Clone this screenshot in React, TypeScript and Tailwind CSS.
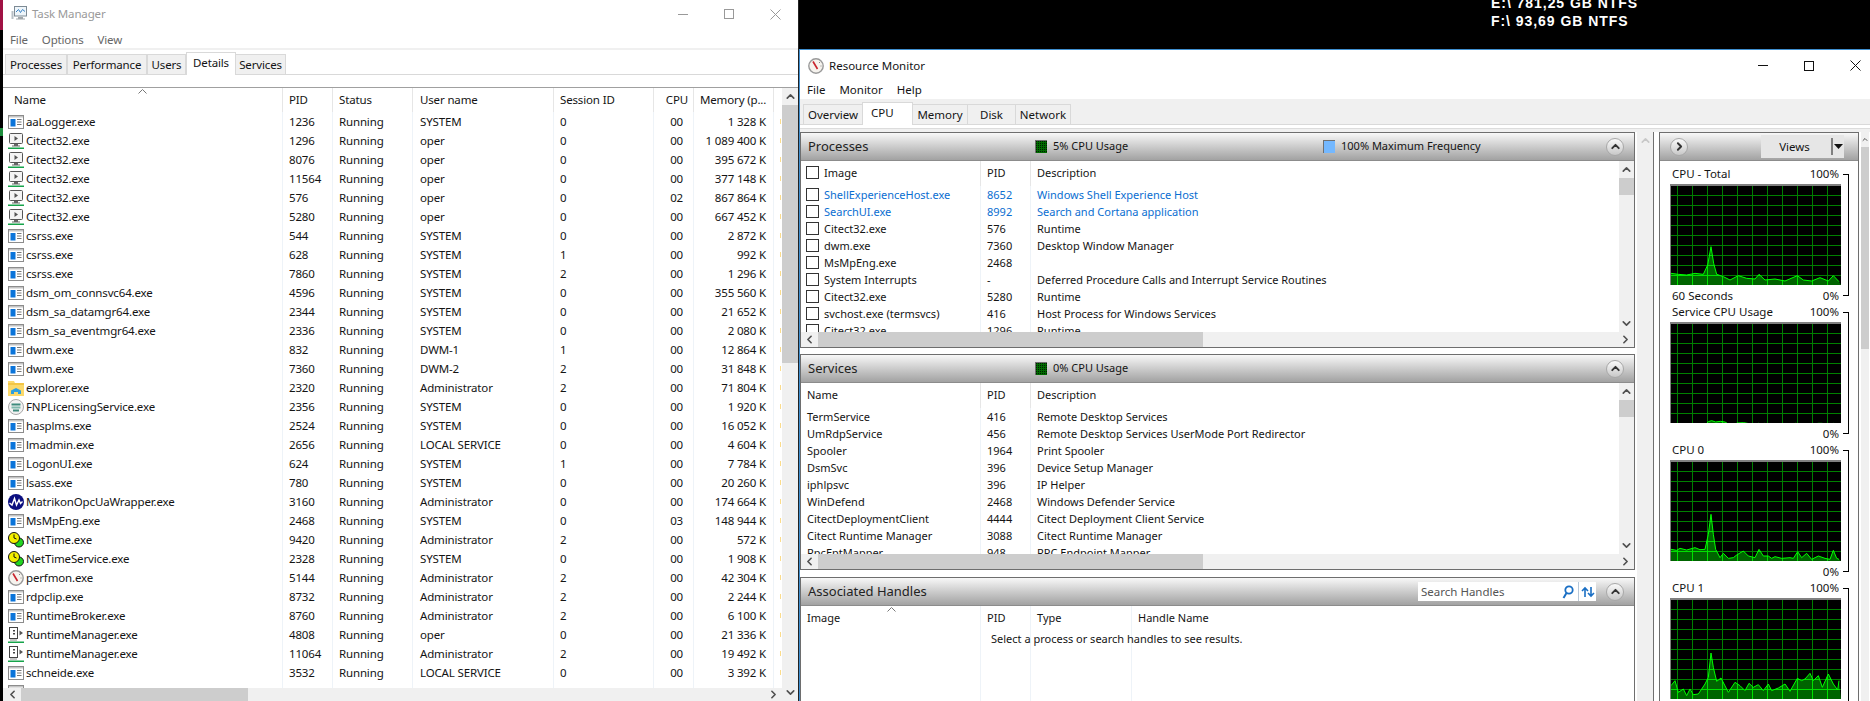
import { ChevronUp, ChevronDown, ChevronLeft, ChevronRight } from 'lucide-react'

// ============================================
// Task Manager + Resource Monitor side by side
// ============================================

type Proc = { name: string; pid: string; user: string; sid: string; cpu: string; mem: string; icon?: string }

const PROCS: Proc[] = [
  { name: 'aaLogger.exe', pid: '1236', user: 'SYSTEM', sid: '0', cpu: '00', mem: '1 328 K' },
  { name: 'Citect32.exe', pid: '1296', user: 'oper', sid: '0', cpu: '00', mem: '1 089 400 K', icon: 'monitor' },
  { name: 'Citect32.exe', pid: '8076', user: 'oper', sid: '0', cpu: '00', mem: '395 672 K', icon: 'monitor' },
  { name: 'Citect32.exe', pid: '11564', user: 'oper', sid: '0', cpu: '00', mem: '377 148 K', icon: 'monitor' },
  { name: 'Citect32.exe', pid: '576', user: 'oper', sid: '0', cpu: '02', mem: '867 864 K', icon: 'monitor' },
  { name: 'Citect32.exe', pid: '5280', user: 'oper', sid: '0', cpu: '00', mem: '667 452 K', icon: 'monitor' },
  { name: 'csrss.exe', pid: '544', user: 'SYSTEM', sid: '0', cpu: '00', mem: '2 872 K' },
  { name: 'csrss.exe', pid: '628', user: 'SYSTEM', sid: '1', cpu: '00', mem: '992 K' },
  { name: 'csrss.exe', pid: '7860', user: 'SYSTEM', sid: '2', cpu: '00', mem: '1 296 K' },
  { name: 'dsm_om_connsvc64.exe', pid: '4596', user: 'SYSTEM', sid: '0', cpu: '00', mem: '355 560 K' },
  { name: 'dsm_sa_datamgr64.exe', pid: '2344', user: 'SYSTEM', sid: '0', cpu: '00', mem: '21 652 K' },
  { name: 'dsm_sa_eventmgr64.exe', pid: '2336', user: 'SYSTEM', sid: '0', cpu: '00', mem: '2 080 K' },
  { name: 'dwm.exe', pid: '832', user: 'DWM-1', sid: '1', cpu: '00', mem: '12 864 K' },
  { name: 'dwm.exe', pid: '7360', user: 'DWM-2', sid: '2', cpu: '00', mem: '31 848 K' },
  { name: 'explorer.exe', pid: '2320', user: 'Administrator', sid: '2', cpu: '00', mem: '71 804 K', icon: 'folder' },
  { name: 'FNPLicensingService.exe', pid: '2356', user: 'SYSTEM', sid: '0', cpu: '00', mem: '1 920 K', icon: 'fnp' },
  { name: 'hasplms.exe', pid: '2524', user: 'SYSTEM', sid: '0', cpu: '00', mem: '16 052 K' },
  { name: 'lmadmin.exe', pid: '2656', user: 'LOCAL SERVICE', sid: '0', cpu: '00', mem: '4 604 K' },
  { name: 'LogonUI.exe', pid: '624', user: 'SYSTEM', sid: '1', cpu: '00', mem: '7 784 K' },
  { name: 'lsass.exe', pid: '780', user: 'SYSTEM', sid: '0', cpu: '00', mem: '20 260 K' },
  { name: 'MatrikonOpcUaWrapper.exe', pid: '3160', user: 'Administrator', sid: '0', cpu: '00', mem: '174 664 K', icon: 'matrikon' },
  { name: 'MsMpEng.exe', pid: '2468', user: 'SYSTEM', sid: '0', cpu: '03', mem: '148 944 K' },
  { name: 'NetTime.exe', pid: '9420', user: 'Administrator', sid: '2', cpu: '00', mem: '572 K', icon: 'nettime' },
  { name: 'NetTimeService.exe', pid: '2328', user: 'SYSTEM', sid: '0', cpu: '00', mem: '1 908 K', icon: 'nettime' },
  { name: 'perfmon.exe', pid: '5144', user: 'Administrator', sid: '2', cpu: '00', mem: '42 304 K', icon: 'perfmon' },
  { name: 'rdpclip.exe', pid: '8732', user: 'Administrator', sid: '2', cpu: '00', mem: '2 244 K' },
  { name: 'RuntimeBroker.exe', pid: '8760', user: 'Administrator', sid: '2', cpu: '00', mem: '6 100 K' },
  { name: 'RuntimeManager.exe', pid: '4808', user: 'oper', sid: '0', cpu: '00', mem: '21 336 K', icon: 'runtime' },
  { name: 'RuntimeManager.exe', pid: '11064', user: 'Administrator', sid: '2', cpu: '00', mem: '19 492 K', icon: 'runtime' },
  { name: 'schneide.exe', pid: '3532', user: 'LOCAL SERVICE', sid: '0', cpu: '00', mem: '3 392 K' },
]

const RM_PROCS = [
  ['ShellExperienceHost.exe', '8652', 'Windows Shell Experience Host', 'blue'],
  ['SearchUI.exe', '8992', 'Search and Cortana application', 'blue'],
  ['Citect32.exe', '576', 'Runtime'],
  ['dwm.exe', '7360', 'Desktop Window Manager'],
  ['MsMpEng.exe', '2468', ''],
  ['System Interrupts', '-', 'Deferred Procedure Calls and Interrupt Service Routines'],
  ['Citect32.exe', '5280', 'Runtime'],
  ['svchost.exe (termsvcs)', '416', 'Host Process for Windows Services'],
  ['Citect32.exe', '1296', 'Runtime'],
]

const RM_SERVICES = [
  ['TermService', '416', 'Remote Desktop Services'],
  ['UmRdpService', '456', 'Remote Desktop Services UserMode Port Redirector'],
  ['Spooler', '1964', 'Print Spooler'],
  ['DsmSvc', '396', 'Device Setup Manager'],
  ['iphlpsvc', '396', 'IP Helper'],
  ['WinDefend', '2468', 'Windows Defender Service'],
  ['CitectDeploymentClient', '4444', 'Citect Deployment Client Service'],
  ['Citect Runtime Manager', '3088', 'Citect Runtime Manager'],
  ['RpcEptMapper', '948', 'RPC Endpoint Mapper'],
]

// graph points, read off the picture at 3x: [x, y]
const CPU_TOTAL: [number, number][] = [[218, 745], [240, 748], [265, 750], [290, 745], [315, 748], [328, 720], [338, 665], [346, 715], [355, 748], [375, 755], [395, 765], [420, 752], [445, 760], [470, 762], [482, 748], [500, 765], [530, 762], [560, 768], [597, 752], [615, 765], [640, 768], [665, 758], [690, 768], [705, 752], [722, 770]]
const CPU_SERVICE: [number, number][] = [[218, 786], [278, 786], [282, 782], [288, 786], [320, 786], [330, 776], [340, 773], [352, 777], [366, 775], [380, 777], [390, 783], [408, 786], [416, 780], [436, 779], [452, 782], [458, 786], [474, 786], [480, 781], [490, 783], [500, 781], [506, 786], [585, 786], [590, 781], [600, 782], [606, 786], [622, 786], [626, 782], [632, 786], [655, 786], [658, 781], [672, 781], [678, 786], [700, 786], [706, 781], [714, 783], [722, 786]]
const CPU_0: [number, number][] = [[218, 745], [235, 748], [245, 742], [265, 747], [290, 740], [305, 746], [320, 745], [330, 700], [338, 640], [345, 700], [352, 745], [365, 770], [375, 757], [390, 772], [405, 770], [415, 762], [435, 750], [450, 765], [470, 770], [482, 745], [495, 765], [510, 765], [520, 772], [530, 767], [550, 772], [575, 770], [585, 772], [598, 752], [610, 770], [625, 757], [640, 775], [660, 765], [680, 772], [695, 775], [705, 748], [715, 772], [722, 775]]
const CPU_1: [number, number][] = [[218, 740], [230, 725], [240, 760], [255, 750], [265, 770], [275, 750], [285, 767], [300, 765], [320, 735], [330, 715], [338, 642], [345, 685], [355, 727], [368, 717], [390, 760], [410, 730], [425, 740], [440, 755], [452, 733], [465, 745], [480, 737], [495, 755], [510, 735], [520, 755], [540, 747], [560, 735], [575, 757], [597, 718], [610, 725], [620, 720], [635, 703], [645, 725], [660, 710], [672, 745], [690, 705], [705, 735], [718, 753], [722, 725]]

function toGraph(pts: [number, number][]) {
  return pts.map(([x, y]) => [(x - 218) / 3, (y - 483) / 3] as [number, number])
}

function Graph({ id, pts }: { id: string; pts: [number, number][] }) {
  const line = toGraph(pts).map(([x, y]) => `${x},${y}`).join(' ')
  const area = `0,99 ${line} 170,99`
  const grid = (
    <>
      {Array.from({ length: 11 }, (_, i) => (
        <line key={`v${i}`} x1={6.5 + i * 15} x2={6.5 + i * 15} y1={0} y2={99} />
      ))}
      {Array.from({ length: 9 }, (_, i) => (
        <line key={`h${i}`} x1={0} x2={170} y1={9.5 + i * 10} y2={9.5 + i * 10} />
      ))}
    </>
  )
  return (
    <div className="h-[101px] w-[171px] border-t-2 border-l border-[#808080]">
      <svg width={170} height={99} viewBox="0 0 170 99" className="block">
        <rect width={170} height={99} fill="#000" />
        <g stroke="#008000" strokeWidth={1}>{grid}</g>
        <clipPath id={id}><polygon points={area} /></clipPath>
        <polygon points={area} fill="#006400" />
        <g stroke="#00e000" strokeWidth={1} clipPath={`url(#${id})`}>{grid}</g>
        <polyline points={line} fill="none" stroke="#00ff00" strokeWidth={1} />
      </svg>
    </div>
  )
}

function GraphBlock({ id, title, foot, pts }: { id: string; title: string; foot?: string; pts: [number, number][] }) {
  return (
    <div className="flex h-[138px] shrink-0 text-[11.5px]">
      <div className="w-[171px]">
        <div className="flex h-[16px] items-center justify-between pl-[2px] pr-[2px] leading-none">
          <span>{title}</span>
          <span>100%</span>
        </div>
        <div className="mt-[2px]"><Graph id={id} pts={pts} /></div>
        <div className="mt-[2px] flex h-[17px] items-center justify-between pl-[2px] pr-[2px] leading-none">
          <span>{foot}</span>
          <span>0%</span>
        </div>
      </div>
      <div className="ml-[2px] mt-[8px] h-[122px] w-[6px] border-y border-r border-black" />
    </div>
  )
}

// ---------- icons ----------

function AppIcon({ type }: { type?: string }) {
  if (type === 'monitor') {
    return (
      <svg width={16} height={16} viewBox="0 0 16 16" className="shrink-0">
        <rect x={1.5} y={0.5} width={13} height={10} rx={1} fill="#f4f4f4" stroke="#555" />
        <path d="M6.5 3 L10 5.5 L6.5 8Z" fill="#555" />
        <path d="M6 11h4v1.5h2V13.5H4V12.5h2Z" fill="#666" />
        <rect x={0} y={14.5} width={16} height={1.5} fill="#16a34a" />
      </svg>
    )
  }
  if (type === 'runtime') {
    return (
      <svg width={16} height={16} viewBox="0 0 16 16" className="shrink-0">
        <rect x={1.5} y={0.5} width={8} height={11} fill="#fff" stroke="#444" />
        <path d="M5 3h2v1.5H5Zm0 3h2v1.5H5Z" fill="#444" />
        <path d="M11.5 3.5 L15 6 L11.5 8.5Z" fill="#555" />
        <path d="M2 12.5h7v1H2Z" fill="#888" />
        <rect x={0} y={14.5} width={16} height={1.5} fill="#16a34a" />
      </svg>
    )
  }
  if (type === 'folder') {
    return (
      <svg width={16} height={16} viewBox="0 0 16 16" className="shrink-0">
        <path d="M0 1h6l1 2h9v13H0Z" fill="#fbd96b" />
        <path d="M0 3h16v2H0Z" fill="#f3c544" />
        <path d="M3 14V10.5L8 8l5 2.5V14h-3v-2H6v2Z" fill="#2f9fe0" />
      </svg>
    )
  }
  if (type === 'fnp') {
    return (
      <svg width={16} height={16} viewBox="0 0 16 16" className="shrink-0">
        <circle cx={8} cy={8} r={7.5} fill="#f2f2f2" stroke="#a8a8a8" />
        <path d="M3.5 4.5h9v2h-9Z" fill="#3d8a7c" />
        <path d="M3.5 7.5h9v2h-9Z" fill="#7db8ac" />
        <path d="M5 10.5h6v2H5Z" fill="#3d8a7c" />
      </svg>
    )
  }
  if (type === 'matrikon') {
    return (
      <svg width={16} height={16} viewBox="0 0 16 16" className="shrink-0">
        <circle cx={8} cy={8} r={8} fill="#0b0f80" />
        <path d="M1.5 9 L4 11 L6.5 4.5 L8.5 11 L11 6 L12.5 9.5 L14.5 7.5" fill="none" stroke="#fff" strokeWidth={1.4} />
      </svg>
    )
  }
  if (type === 'nettime') {
    return (
      <svg width={16} height={16} viewBox="0 0 16 16" className="shrink-0">
        <circle cx={11} cy={10.5} r={4.5} fill="#22d422" stroke="#111" />
        <circle cx={6} cy={6} r={5.5} fill="#f5f000" stroke="#111" />
        <path d="M6 2.5V6L8.5 7" fill="none" stroke="#111" />
      </svg>
    )
  }
  if (type === 'perfmon') return <GaugeIcon />
  return (
    <svg width={16} height={14} viewBox="0 0 16 14" className="shrink-0">
      <rect x={0.5} y={0.5} width={15} height={13} fill="#fff" stroke="#8c8c8c" />
      <rect x={1} y={1} width={14} height={1.5} fill="#c4c4c4" />
      <rect x={2.5} y={4} width={5} height={7.5} fill="#0a74da" />
      <path d="M9 4.5h4.5M9 7h4.5M9 9.5h4.5" stroke="#777" />
    </svg>
  )
}

function GaugeIcon() {
  return (
    <svg width={16} height={16} viewBox="0 0 16 16" className="shrink-0">
      <circle cx={8} cy={8} r={7.2} fill="#f6f3ee" stroke="#9a9a9a" strokeWidth={1.4} />
      <path d="M5 3.5 L9.5 11" stroke="#c8232c" strokeWidth={1.6} />
      <path d="M11 4l1 1M12.5 8h1" stroke="#888" />
    </svg>
  )
}

function TaskIcon() {
  return (
    <svg width={16} height={16} viewBox="0 0 16 16" className="shrink-0">
      <rect x={3.5} y={0.5} width={12} height={9.5} fill="#eef5fa" stroke="#7d8a94" />
      <path d="M5 6 L7.5 3.5 L9.5 6.5 L11.5 3.5 L14 5.5" fill="none" stroke="#3a83c4" />
      <path d="M7 11h5v1.5h2v1H5v-1h2Z" fill="#a0a6aa" />
      <rect x={0.5} y={5} width={2} height={8} fill="#b8c0c6" />
    </svg>
  )
}

function WinControls({ color }: { color: string }) {
  return (
    <div className="flex h-full" style={{ color }}>
      <div className="flex w-[46px] items-center justify-center">
        <div className="h-px w-[10px] bg-current" />
      </div>
      <div className="flex w-[46px] items-center justify-center">
        <div className="h-[10px] w-[10px] border border-current" />
      </div>
      <div className="flex w-[46px] items-center justify-center">
        <svg width={11} height={11} viewBox="0 0 11 11"><path d="M0.5 0.5 L10.5 10.5 M10.5 0.5 L0.5 10.5" stroke="currentColor" /></svg>
      </div>
    </div>
  )
}

function SortCaret() {
  return (
    <svg width={9} height={5} viewBox="0 0 9 5" className="block">
      <path d="M0.5 4.5 L4.5 0.5 L8.5 4.5" fill="none" stroke="#777" />
    </svg>
  )
}

// ---------- scrollbars ----------

function VScroll({ className, thumbTop, thumbH }: { className: string; thumbTop: string; thumbH: string }) {
  return (
    <div className={`flex shrink-0 flex-col items-center bg-[#f0f0f0] text-[#505050] ${className}`}>
      <div className={`flex w-full items-center justify-center ${thumbTop}`}><ChevronUp size={13} strokeWidth={3} /></div>
      <div className={`w-full bg-[#cdcdcd] ${thumbH}`} />
      <div className="flex-1" />
      <div className="flex h-[17px] w-full items-center justify-center"><ChevronDown size={13} strokeWidth={3} /></div>
    </div>
  )
}

function HScroll({ className, lead, thumb }: { className: string; lead: string; thumb: string }) {
  return (
    <div className={`flex shrink-0 items-stretch bg-[#f0f0f0] text-[#505050] ${className}`}>
      <div className={`flex items-center justify-center ${lead}`}><ChevronLeft size={13} strokeWidth={3} /></div>
      <div className={`bg-[#cdcdcd] ${thumb}`} />
      <div className="flex-1" />
      <div className="flex w-[18px] items-center justify-center"><ChevronRight size={13} strokeWidth={3} /></div>
    </div>
  )
}

function RoundButton({ right }: { right?: boolean }) {
  return (
    <div className="flex h-[18px] w-[18px] items-center justify-center rounded-full border border-[#a8a8a8] bg-linear-to-b from-[#fafafa] to-[#c8c8c8] text-[#333]">
      {right ? <ChevronRight size={13} strokeWidth={3.5} /> : <ChevronUp size={13} strokeWidth={3.5} />}
    </div>
  )
}

function Swatch({ blue }: { blue?: boolean }) {
  return (
    <div className={`h-[13px] w-[12px] border-t border-l border-[#707070] ${blue ? 'bg-[#74b8ff]' : 'bg-[#006a00]'}`}>
      {!blue && (
        <svg width={11} height={12} className="block">
          <defs>
            <pattern id="dots" width={2} height={2} patternUnits="userSpaceOnUse"><rect width={1} height={1} fill="#001c00" /></pattern>
          </defs>
          <rect width={11} height={12} fill="url(#dots)" />
        </svg>
      )}
    </div>
  )
}

// ---------- panels ----------

function PanelHeader({ title, swatches, search }: { title: string; swatches?: [string, number, boolean?][]; search?: boolean }) {
  return (
    <div className="flex h-[28px] shrink-0 items-center border-b border-[#8c8c8c] bg-linear-to-b from-[#f8f8f8] to-[#a2a2a2]">
      <span className="w-[234px] pl-[7px] text-[13px] text-[#222]">{title}</span>
      {swatches?.map(([label, w, blue]) => (
        <div key={label} className="flex items-center gap-[6px]" style={{ width: w }}>
          <Swatch blue={blue} />
          <span>{label}</span>
        </div>
      ))}
      <div className="flex-1" />
      {search && (
        <div className="mr-[10px] flex h-[19px] w-[178px] items-center bg-white pl-[3px] text-[#555]">
          <span className="flex-1 text-[11.5px]">Search Handles</span>
          <svg width={12} height={14} viewBox="0 0 12 14" className="mr-[4px]">
            <circle cx={7} cy={5} r={3.7} fill="none" stroke="#1a6fc4" strokeWidth={1.8} />
            <path d="M4.5 8 L1.5 13" stroke="#1a6fc4" strokeWidth={2} />
          </svg>
          <div className="flex h-full w-[18px] items-center justify-center border-l border-[#b8c8d8]">
            <svg width={14} height={14} viewBox="0 0 14 14">
              <path d="M4 12V3M1 6l3-3 3 3" fill="none" stroke="#1a6fc4" strokeWidth={1.6} />
              <path d="M10 2v9M7 8l3 3 3-3" fill="none" stroke="#1a6fc4" strokeWidth={1.6} />
            </svg>
          </div>
        </div>
      )}
      <div className="mr-[10px]"><RoundButton /></div>
    </div>
  )
}

function RmTable({ head, rows, check }: { head: string; rows: string[][]; check?: boolean }) {
  const pad = check ? 'pl-[23px]' : 'pl-[6px]'
  return (
    <div className="min-w-0 flex-1 overflow-hidden">
      <div className="flex h-[25px] items-center">
        <div className={`relative flex h-full w-[180px] items-center border-r border-[#e6e6e6] ${pad}`}>
          {check && <div className="absolute top-[5px] left-[5px] h-[13px] w-[13px] border border-[#333] bg-white" />}
          {head}
        </div>
        <div className="flex h-full w-[50px] items-center border-r border-[#e6e6e6] pl-[6px]">PID</div>
        <div className="pl-[6px]">Description</div>
      </div>
      {rows.map((r, i) => (
        <div key={i} className={`flex h-[17px] items-center leading-none ${r[3] ? 'text-[#0a6ed1]' : ''}`}>
          <div className={`relative flex h-full w-[180px] items-center border-r border-[#eef3f8] ${pad}`}>
            {check && <div className="absolute top-[2px] left-[5px] h-[13px] w-[13px] border border-[#333] bg-white" />}
            {r[0]}
          </div>
          <div className="flex h-full w-[50px] items-center border-r border-[#eef3f8] pl-[6px]">{r[1]}</div>
          <div className="pl-[6px]">{r[2]}</div>
        </div>
      ))}
    </div>
  )
}

function RmPanel({ title, swatches, head, rows, check }: { title: string; swatches: [string, number, boolean?][]; head: string; rows: string[][]; check?: boolean }) {
  return (
    <div className="flex h-[216px] shrink-0 flex-col border border-[#6e6e6e] bg-white">
      <PanelHeader title={title} swatches={swatches} />
      <div className="flex min-h-0 flex-1">
        <RmTable head={head} rows={rows} check={check} />
        <VScroll className="w-[15px]" thumbTop="h-[17px]" thumbH="h-[17px]" />
      </div>
      <HScroll className="h-[15px]" lead="w-[17px]" thumb="w-[385px]" />
    </div>
  )
}

export default function App() {
  return (
    <div className="flex h-[701px] w-[1870px] overflow-hidden bg-black font-['Noto_Sans',sans-serif] text-[11px] text-[#141414]">
      {/* desktop sliver behind the windows */}
      <div className="flex w-[3px] shrink-0 flex-col">
        <div className="h-[30px] bg-[#a01244]" />
        <div className="h-[98px] bg-black" />
        <div className="h-[8px] bg-[#1c8c3c]" />
        <div className="flex-1 bg-black" />
      </div>

      {/* Task Manager */}
      <div className="flex w-[795px] shrink-0 flex-col bg-white text-[11.5px] tracking-[-0.15px]">
        <div className="flex h-[31px] shrink-0 items-center pb-[3px] pl-[8px] text-[#9a9a9a]">
          <TaskIcon />
          <span className="ml-[5px] flex-1">Task Manager</span>
          <WinControls color="#999999" />
        </div>
        <div className="flex h-[17px] shrink-0 items-center gap-[14px] pl-[7px] text-[#666]">
          <span>File</span><span>Options</span><span>View</span>
        </div>
        <div className="h-[2px] shrink-0 bg-[#f0f0f0]" />
        <div className="flex h-[25px] shrink-0 items-end border-b border-[#d9d9d9] pl-[2px]">
          {[['Processes', 'w-[62px]'], ['Performance', 'w-[80px]'], ['Users', 'w-[39px]']].map(([t, w]) => (
            <div key={t} className={`flex h-[20px] items-center justify-center border-t border-r border-l border-[#d9d9d9] bg-[#f0f0f0] ${w}`}>{t}</div>
          ))}
          <div className="-mb-px flex h-[23px] w-[50px] items-center justify-center border-t border-r border-l border-[#d9d9d9] bg-white pb-[2px]">Details</div>
          <div className="flex h-[20px] w-[50px] items-center justify-center border-t border-r border-[#d9d9d9] bg-[#f0f0f0]">Services</div>
        </div>
        <div className="h-[12px] shrink-0" />
        <div className="flex min-h-0 flex-1 border-t border-[#a0a0a0]">
          <div className="flex min-w-0 flex-1 flex-col">
            <div className="min-h-0 flex-1 overflow-hidden">
              <div className="relative flex h-[24px] items-center">
                <div className="absolute top-[1px] left-[135px]"><SortCaret /></div>
                <div className="flex h-full w-[280px] items-center border-r border-[#e6e6e6] pl-[11px]">Name</div>
                <div className="flex h-full w-[50px] items-center border-r border-[#e6e6e6] pl-[6px]">PID</div>
                <div className="flex h-full w-[80px] items-center border-r border-[#e6e6e6] pl-[6px]">Status</div>
                <div className="flex h-full w-[141px] items-center border-r border-[#e6e6e6] pl-[7px]">User name</div>
                <div className="flex h-full w-[100px] items-center border-r border-[#e6e6e6] pl-[6px]">Session ID</div>
                <div className="flex h-full w-[40px] items-center justify-end border-r border-[#e6e6e6] pr-[5px]">CPU</div>
                <div className="flex h-full w-[80px] items-center border-r border-[#e6e6e6] pl-[6px]">Memory (p...</div>
              </div>
              {PROCS.map((p, i) => (
                <div key={i} className="flex h-[19px] items-center leading-none">
                  <div className="flex h-full w-[280px] items-center gap-[2px] border-r border-[#eef3f8] pl-[5px]">
                    <AppIcon type={p.icon} />
                    <span>{p.name}</span>
                  </div>
                  <div className="flex h-full w-[50px] items-center border-r border-[#eef3f8] pl-[6px]">{p.pid}</div>
                  <div className="flex h-full w-[80px] items-center border-r border-[#eef3f8] pl-[6px]">Running</div>
                  <div className="flex h-full w-[141px] items-center border-r border-[#eef3f8] pl-[7px]">{p.user}</div>
                  <div className="flex h-full w-[100px] items-center border-r border-[#eef3f8] pl-[6px]">{p.sid}</div>
                  <div className="flex h-full w-[40px] items-center justify-end border-r border-[#eef3f8] pr-[10px]">{p.cpu}</div>
                  <div className="flex h-full w-[80px] items-center justify-end border-r border-[#eef3f8] pr-[7px] whitespace-nowrap">{p.mem}</div>
                  <div className="ml-[6px] h-[5px] w-px bg-[#fbdc8c]" />
                </div>
              ))}
              {/* next row, only the top of its icon shows */}
              <div className="flex h-[19px] items-start">
                <div className="flex h-full w-[280px] items-center border-r border-[#eef3f8] pl-[5px]"><AppIcon /></div>
                <div className="h-full w-[50px] border-r border-[#eef3f8]" />
                <div className="h-full w-[80px] border-r border-[#eef3f8]" />
                <div className="h-full w-[141px] border-r border-[#eef3f8]" />
                <div className="h-full w-[100px] border-r border-[#eef3f8]" />
                <div className="h-full w-[40px] border-r border-[#eef3f8]" />
                <div className="h-full w-[80px] border-r border-[#eef3f8]" />
              </div>
            </div>
            <HScroll className="h-[13px]" lead="w-[18px]" thumb="w-[227px]" />
          </div>
          <VScroll className="w-[16px]" thumbTop="h-[17px]" thumbH="h-[258px]" />
        </div>
      </div>

      <div className="w-px shrink-0 bg-[#222]" />

      {/* Resource Monitor */}
      <div className="flex min-w-0 flex-1 flex-col">
        <div className="flex h-[49px] shrink-0 flex-col justify-end overflow-hidden bg-black pb-[19px] pl-[692px] font-['Liberation_Sans',sans-serif] text-[14px] leading-[18px] font-bold tracking-[0.95px] text-white">
          <div>E:\ 781,25 GB NTFS</div>
          <div>F:\ 93,69 GB NTFS</div>
        </div>
        <div className="flex min-h-0 flex-1 flex-col border-t border-l border-[#3f8fd0] bg-white">
          <div className="flex h-[31px] shrink-0 items-center pl-[8px] text-[11.5px]">
            <GaugeIcon />
            <span className="ml-[5px] flex-1">Resource Monitor</span>
            <div className="-mr-[8px] h-full"><WinControls color="#111111" /></div>
          </div>
          <div className="flex h-[18px] shrink-0 items-center gap-[14px] pl-[7px] text-[11.5px]">
            <span>File</span><span>Monitor</span><span>Help</span>
          </div>
          <div className="flex h-[26px] shrink-0 items-end border-b border-[#d9d9d9] bg-[#f0f0f0] pl-[3px] text-[11.5px]">
            <div className="flex h-[20px] w-[59px] items-center justify-center border-t border-l border-[#d9d9d9]">Overview</div>
            <div className="-mb-px flex h-[23px] w-[51px] items-start border-x border-t border-[#d9d9d9] bg-white pt-[1px] pl-[8px]">CPU</div>
            <div className="flex h-[20px] w-[55px] items-center justify-center border-t border-r border-[#d9d9d9]">Memory</div>
            <div className="flex h-[20px] w-[48px] items-center justify-center border-t border-r border-[#d9d9d9]">Disk</div>
            <div className="flex h-[20px] w-[55px] items-center justify-center border-t border-r border-[#d9d9d9]">Network</div>
          </div>
          <div className="h-[3px] shrink-0 bg-white" />
          <div className="h-[4px] shrink-0 border-t border-[#dcdcdc] bg-[#f0f0f0]" />

          <div className="flex min-h-0 flex-1">
            {/* left column */}
            <div className="flex w-[835px] shrink-0 flex-col">
              <RmPanel
                title="Processes"
                swatches={[['5% CPU Usage', 288], ['100% Maximum Frequency', 270, true]]}
                head="Image"
                rows={RM_PROCS}
                check
              />
              <div className="h-[6px] shrink-0" />
              <RmPanel
                title="Services"
                swatches={[['0% CPU Usage', 288]]}
                head="Name"
                rows={RM_SERVICES}
              />
              <div className="h-[7px] shrink-0" />
              <div className="flex min-h-0 flex-1 flex-col border border-[#6e6e6e] border-b-0 bg-white">
                <PanelHeader title="Associated Handles" search />
                <div className="relative min-h-0 flex-1">
                  <div className="absolute top-[1px] left-[86px]"><SortCaret /></div>
                  <div className="absolute top-[27px] left-[190px] leading-none">Select a process or search handles to see results.</div>
                  <div className="flex h-full">
                    <div className="h-full w-[180px] border-r border-[#eef3f8] pl-[6px] pt-[4px]">Image</div>
                    <div className="h-full w-[50px] border-r border-[#eef3f8] pl-[6px] pt-[4px]">PID</div>
                    <div className="h-full w-[101px] border-r border-[#eef3f8] pl-[6px] pt-[4px]">Type</div>
                    <div className="pl-[6px] pt-[4px]">Handle Name</div>
                  </div>
                </div>
              </div>
            </div>

            {/* strip between the columns */}
            <div className="ml-[2px] flex w-[16px] shrink-0 justify-center bg-[#f0f0f0] pt-[1px] text-[#c8c8c8]">
              <ChevronUp size={13} strokeWidth={3} className="mt-[1px]" />
            </div>
            <div className="w-px shrink-0 bg-[#707070]" />
            <div className="w-[5px] shrink-0" />

            {/* graphs */}
            <div className="flex w-[200px] shrink-0 flex-col border-x border-t border-[#6e6e6e]">
              <div className="flex h-[28px] shrink-0 items-center border-b border-[#8c8c8c] bg-linear-to-b from-[#f8f8f8] to-[#a2a2a2] pl-[10px]">
                <RoundButton right />
                <div className="ml-[73px] flex h-[23px] w-[83px] items-center bg-[#e6e6e6]">
                  <span className="flex-1 pr-[3px] text-center text-[11.5px]">Views</span>
                  <div className="flex h-[17px] w-[13px] items-center justify-center border-l-2 border-[#808080]">
                    <svg width={9} height={5} viewBox="0 0 9 5"><path d="M0 0h9L4.5 5Z" fill="#111" /></svg>
                  </div>
                </div>
              </div>
              <div className="min-h-0 flex-1 overflow-hidden pl-[10px] pt-[5px]">
                <GraphBlock id="g-total" title="CPU - Total" foot="60 Seconds" pts={CPU_TOTAL} />
                <GraphBlock id="g-svc" title="Service CPU Usage" pts={CPU_SERVICE} />
                <GraphBlock id="g-0" title="CPU 0" pts={CPU_0} />
                <GraphBlock id="g-1" title="CPU 1" pts={CPU_1} />
              </div>
            </div>
            <div className="w-[2px] shrink-0" />
            <div className="flex w-[8px] shrink-0 flex-col bg-[#f0f0f0]">
              <div className="flex h-[15px] justify-start text-[#555]"><ChevronUp size={13} strokeWidth={3} className="mt-[1px]" /></div>
              <div className="h-[202px] bg-[#cdcdcd]" />
            </div>
          </div>
        </div>
      </div>
    </div>
  )
}
